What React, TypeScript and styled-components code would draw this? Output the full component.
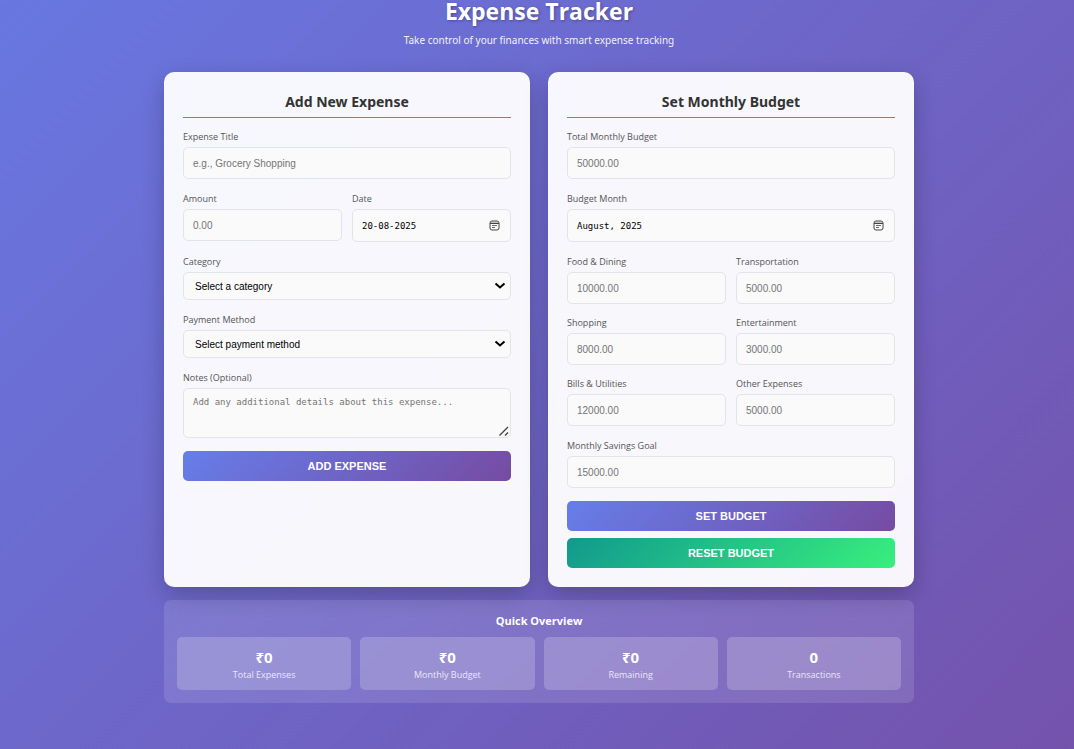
import React, { useId } from "react";
import styled, { createGlobalStyle } from "styled-components";

const sans = `"Open Sans", "Noto Sans", sans-serif`;
const display = `"Noto Sans", "Open Sans", sans-serif`;
const control = `"Liberation Sans", Arial, sans-serif`;
const mono = `"DejaVu Sans Mono", "Liberation Mono", monospace`;

const GlobalStyle = createGlobalStyle`
  * { box-sizing: border-box; }
  body { margin: 0; font-family: ${sans}; color: #333; }
  h1, h2, h3, p, dl, dd, dt { margin: 0; }
`;

const Page = styled.div`
  min-height: 100vh;
  padding: 0 20px 46px 24px;
  background: linear-gradient(135deg, #667eea -18%, #764ba2 120%);
`;

const Container = styled.main`
  max-width: 750px;
  margin: 0 auto;
`;

const Header = styled.header`
  padding-bottom: 24px;
  text-align: center;
  color: #fff;
`;

const Title = styled.h1`
  font-size: 23px;
  line-height: 22px;
  font-weight: 700;
  text-shadow: 1px 1px 3px rgba(0, 0, 0, 0.3);
`;

const Subtitle = styled.p`
  margin-top: 10px;
  font-family: ${display};
  font-size: 10px;
  line-height: 16px;
  opacity: 0.9;
`;

const Columns = styled.div`
  display: grid;
  grid-template-columns: repeat(auto-fit, minmax(300px, 1fr));
  gap: 18px;
`;

const Card = styled.section`
  padding: 19px;
  border-radius: 10px;
  background: rgba(255, 255, 255, 0.95);
  box-shadow: 0 8px 22px rgba(0, 0, 0, 0.22);
`;

const CardTitle = styled.h2`
  margin-bottom: 12px;
  padding-bottom: 5px;
  border-bottom: 1px solid #667eea;
  font-family: ${display};
  font-size: 14px;
  line-height: 21px;
  font-weight: 700;
  text-align: center;
`;

const Form = styled.form`
  display: flex;
  flex-direction: column;
  gap: 13px;
`;

const Pair = styled.div`
  display: grid;
  grid-template-columns: 1fr 1fr;
  align-items: start;
  gap: 12px 10px;
`;

const Group = styled.div`
  display: flex;
  flex-direction: column;
  gap: 4px;
  min-width: 0;
`;

const Label = styled.label`
  font-size: 9px;
  line-height: 13px;
  font-weight: 500;
  color: #555;
`;

const Input = styled.input<{ $date?: boolean }>`
  width: 100%;
  height: ${(p) => (p.$date ? 33 : 32)}px;
  padding: 0 9px;
  border: 1px solid #e1e5e9;
  border-radius: 5px;
  background: #fafafa;
  font-family: ${(p) => (p.$date ? mono : control)};
  font-size: ${(p) => (p.$date ? "9px" : "10px")};
  color: #000;
  &::placeholder { color: #757575; opacity: 1; }
`;

const PickerWrap = styled.div`
  position: relative;
`;

const PickerButton = styled.button`
  position: absolute;
  right: 11px;
  top: 11px;
  width: 11px;
  height: 11px;
  padding: 0;
  border: 0;
  background: none;
  color: #444;
  svg { display: block; }
`;

const SelectWrap = styled.div`
  position: relative;
  svg {
    position: absolute;
    right: 5px;
    top: 10px;
    pointer-events: none;
  }
`;

const Select = styled.select`
  appearance: none;
  display: block;
  width: 100%;
  height: 28px;
  padding: 0 20px 0 11px;
  border: 1px solid #e1e5e9;
  border-radius: 5px;
  background: #fafafa;
  font-family: ${control};
  font-size: 10px;
  color: #000;
`;

const NotesWrap = styled.div`
  position: relative;
  svg {
    position: absolute;
    right: 2px;
    bottom: 2px;
    pointer-events: none;
  }
`;

const TextArea = styled.textarea`
  display: block;
  width: 100%;
  height: 50px;
  padding: 8px 9px;
  border: 1px solid #e1e5e9;
  border-radius: 5px;
  background: #fafafa;
  font-family: ${mono};
  font-size: 9px;
  line-height: 11px;
  resize: none;
  &::placeholder { color: #757575; opacity: 1; }
`;

const Actions = styled.div`
  display: flex;
  flex-direction: column;
  gap: 7px;
`;

const Button = styled.button<{ $tone?: "green" }>`
  height: 30px;
  border: 0;
  border-radius: 5px;
  background: ${(p) =>
    p.$tone === "green"
      ? "linear-gradient(135deg, #11998e 0%, #38ef7d 100%)"
      : "linear-gradient(135deg, #667eea 0%, #764ba2 100%)"};
  color: #fff;
  font-family: ${control};
  font-size: 11px;
  font-weight: 700;
  text-transform: uppercase;
`;

const Overview = styled.section`
  margin-top: 13px;
  padding: 13px;
  border-radius: 7px;
  background: rgba(255, 255, 255, 0.12);
  color: #fff;
`;

const OverviewTitle = styled.h3`
  margin-bottom: 8px;
  font-size: 11px;
  line-height: 16px;
  font-weight: 700;
  text-align: center;
`;

const Stats = styled.dl`
  display: grid;
  grid-template-columns: repeat(auto-fit, minmax(120px, 1fr));
  gap: 9px;
`;

const Stat = styled.div`
  display: flex;
  flex-direction: column-reverse;
  padding: 10px 10px 9px;
  border-radius: 5px;
  background: rgba(255, 255, 255, 0.2);
  text-align: center;
`;

const StatValue = styled.dd`
  font-size: 15px;
  line-height: 21px;
  font-weight: 700;
`;

const StatLabel = styled.dt`
  font-size: 9px;
  line-height: 13px;
  opacity: 0.8;
`;

function CalendarIcon() {
  return (
    <svg width="11" height="11" viewBox="0 0 11 11" fill="none" stroke="currentColor">
      <rect x="1" y="1" width="9" height="9" rx="2" />
      <path d="M1.5 2h8" stroke="#888" />
      <path d="M1 3.5h9" />
      <path d="M3 5.5h5M3 7.5h3" strokeWidth="0.8" />
    </svg>
  );
}

function Chevron() {
  return (
    <svg width="12" height="8" viewBox="0 0 12 8" fill="none" stroke="#000" strokeWidth="2">
      <path d="M1.5 1.5L6 5.5L10.5 1.5" />
    </svg>
  );
}

function Grip() {
  return (
    <svg width="10" height="10" viewBox="0 0 10 10" stroke="#444" strokeWidth="1.4">
      <path d="M0.5 9.5L9 1M6 9.5L9 6.5" />
    </svg>
  );
}

function TextField({ label, placeholder, numeric = true }: { label: string; placeholder: string; numeric?: boolean }) {
  const id = useId();
  return (
    <Group>
      <Label htmlFor={id}>{label}</Label>
      <Input id={id} type={numeric ? "number" : "text"} placeholder={placeholder} />
    </Group>
  );
}

function DateField({ label, value }: { label: string; value: string }) {
  const id = useId();
  return (
    <Group>
      <Label htmlFor={id}>{label}</Label>
      <PickerWrap>
        <Input $date id={id} type="text" defaultValue={value} />
        <PickerButton type="button" aria-label="Open calendar">
          <CalendarIcon />
        </PickerButton>
      </PickerWrap>
    </Group>
  );
}

function SelectField({ label, prompt, options }: { label: string; prompt: string; options: string[] }) {
  const id = useId();
  return (
    <Group>
      <Label htmlFor={id}>{label}</Label>
      <SelectWrap>
        <Select id={id} defaultValue="">
          <option value="">{prompt}</option>
          {options.map((o) => (
            <option key={o}>{o}</option>
          ))}
        </Select>
        <Chevron />
      </SelectWrap>
    </Group>
  );
}

const budgetFields = [
  ["Food & Dining", "10000.00"],
  ["Transportation", "5000.00"],
  ["Shopping", "8000.00"],
  ["Entertainment", "3000.00"],
  ["Bills & Utilities", "12000.00"],
  ["Other Expenses", "5000.00"],
];

const stats = [
  ["Total Expenses", "₹0"],
  ["Monthly Budget", "₹0"],
  ["Remaining", "₹0"],
  ["Transactions", "0"],
];

export default function App() {
  const notesId = useId();
  return (
    <Page>
      <GlobalStyle />
      <Container>
        <Header>
          <Title>Expense Tracker</Title>
          <Subtitle>Take control of your finances with smart expense tracking</Subtitle>
        </Header>
        <Columns>
          <Card>
            <CardTitle>Add New Expense</CardTitle>
            <Form>
              <TextField label="Expense Title" placeholder="e.g., Grocery Shopping" numeric={false} />
              <Pair>
                <TextField label="Amount" placeholder="0.00" />
                <DateField label="Date" value="20-08-2025" />
              </Pair>
              <SelectField
                label="Category"
                prompt="Select a category"
                options={["Food & Dining", "Transportation", "Shopping", "Entertainment"]}
              />
              <SelectField label="Payment Method" prompt="Select payment method" options={["Cash", "Card", "UPI"]} />
              <Group>
                <Label htmlFor={notesId}>Notes (Optional)</Label>
                <NotesWrap>
                  <TextArea id={notesId} placeholder="Add any additional details about this expense..." />
                  <Grip />
                </NotesWrap>
              </Group>
              <Button type="button">Add Expense</Button>
            </Form>
          </Card>
          <Card>
            <CardTitle>Set Monthly Budget</CardTitle>
            <Form>
              <TextField label="Total Monthly Budget" placeholder="50000.00" />
              <DateField label="Budget Month" value="August, 2025" />
              <Pair>
                {budgetFields.map(([label, amount]) => (
                  <TextField key={label} label={label} placeholder={amount} />
                ))}
              </Pair>
              <TextField label="Monthly Savings Goal" placeholder="15000.00" />
              <Actions>
                <Button type="button">Set Budget</Button>
                <Button type="button" $tone="green">Reset Budget</Button>
              </Actions>
            </Form>
          </Card>
        </Columns>
        <Overview>
          <OverviewTitle>Quick Overview</OverviewTitle>
          <Stats>
            {stats.map(([label, value]) => (
              <Stat key={label}>
                <StatLabel>{label}</StatLabel>
                <StatValue>{value}</StatValue>
              </Stat>
            ))}
          </Stats>
        </Overview>
      </Container>
    </Page>
  );
}
